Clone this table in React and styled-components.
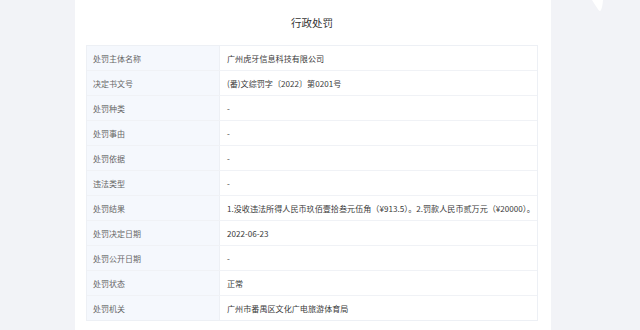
import React from 'react';
import styled, { createGlobalStyle } from 'styled-components';

const rows = [
  ['处罚主体名称', '广州虎牙信息科技有限公司'],
  ['决定书文号', '(番)文综罚字〔2022〕第0201号'],
  ['处罚种类', '-'],
  ['处罚事由', '-'],
  ['处罚依据', '-'],
  ['违法类型', '-'],
  ['处罚结果', '1.没收违法所得人民币玖佰壹拾叁元伍角（¥913.5）。2.罚款人民币贰万元（¥20000）。'],
  ['处罚决定日期', '2022-06-23'],
  ['处罚公开日期', '-'],
  ['处罚状态', '正常'],
  ['处罚机关', '广州市番禺区文化广电旅游体育局'],
];

function App() {
  return (
    <>
      <GlobalStyle />
      <Page>
        <Card>
          <Title>行政处罚</Title>
          <Table>
            {rows.map(([label, value], i) => (
              <Row key={label} $last={i === rows.length - 1}>
                <Label>{label}</Label>
                <Value>{value}</Value>
              </Row>
            ))}
          </Table>
        </Card>
        <Blob width="12" height="12" viewBox="0 0 12 12">
          <path d="M0 0 L11 0 Q10.5 7 9 10 Q8 12 6.5 10 Q3 5 0 0 Z" fill="#ffffff" />
        </Blob>
      </Page>
    </>
  );
}

export default App;

// Styles

const GlobalStyle = createGlobalStyle`
  html, body {
    margin: 0;
    padding: 0;
    background: #f2f3f7;
    font-family: "Noto Sans CJK SC", "Noto Sans", sans-serif;
  }
`;

const Page = styled.div`
  position: relative;
  display: flex;
  height: 330px;
  padding-left: 75px;
  overflow: hidden;
`;

const Card = styled.div`
  width: 476px;
  background: #ffffff;
  padding: 0 13px 0 11px;
  box-sizing: border-box;
`;

const Title = styled.div`
  height: 45px;
  display: flex;
  align-items: center;
  justify-content: center;
  font-size: 10.5px;
  color: #333;
`;

const Table = styled.div`
  border: 1px solid #edf0f5;
  border-bottom: none;
`;

const Row = styled.div`
  display: grid;
  grid-template-columns: 133px 1fr;
  height: 25px;
  border-bottom: 1px solid ${p => (p.$last ? '#edf0f5' : '#f0f2f6')};
  box-sizing: border-box;
`;

const Label = styled.div`
  display: flex;
  align-items: center;
  padding-left: 6px;
  background: #f5f8fd;
  border-right: 1px solid #edf0f5;
  font-size: 8px;
  color: #666;
`;

const Value = styled.div`
  display: flex;
  align-items: center;
  padding-left: 7px;
  font-size: 8.1px;
  color: #3a3a3a;
  white-space: nowrap;
`;

const Blob = styled.svg`
  position: absolute;
  top: 0;
  left: 592px;
`;
